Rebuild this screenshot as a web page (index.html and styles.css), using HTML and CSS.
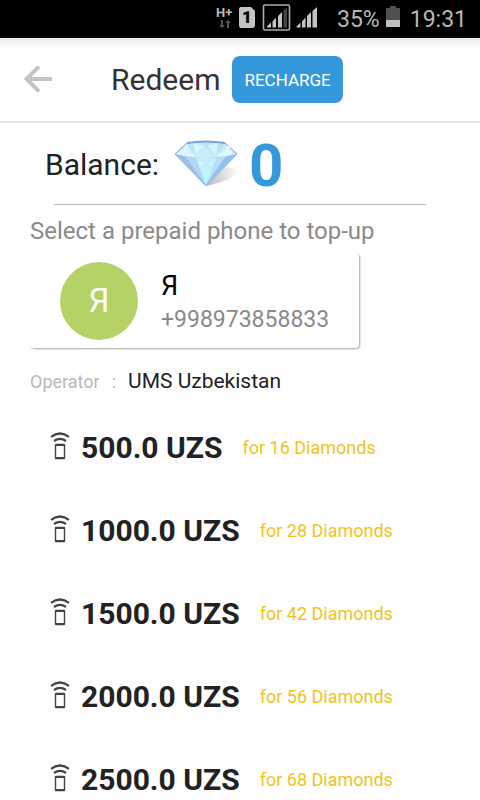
FILE: index.html
```html
<!DOCTYPE html>
<html lang="en">
<head>
<meta charset="utf-8">
<meta name="viewport" content="width=device-width, initial-scale=1">
<title>Redeem</title>
<link rel="stylesheet" href="styles.css">
</head>
<body>
<svg width="0" height="0" class="defs" aria-hidden="true">
  <symbol id="remote" viewBox="0 0 20 28">
    <g fill="none" stroke="#444">
      <path d="M1 4.800Q10-1.800 19 4.800" stroke-width="2.200"/>
      <path d="M4 9Q10 4.800 16 9" stroke-width="2.200"/>
      <rect x="5.500" y="12.500" width="9" height="14" rx=".5" stroke-width="1.400"/>
      <path d="M5 13h10M5 26h10" stroke-width="2"/>
    </g>
  </symbol>
</svg>
<div class="status">
  <svg class="status-icons" viewBox="0 0 120 38" role="img" aria-label="Signal strength">
    <text x="16" y="17" class="net">H+</text>
    <path d="M21 20h2v5h2l-3 3-3-3h2zM27 28v-5h-2l3-3 3 3h-2v5z" fill="#555"/>
    <path d="M41 7h10l4 4v14q0 3-3 3H41q-2 0-2-3V10q0-3 2-3z" fill="#c4c4c4"/>
    <text x="42" y="23" class="sim">1</text>
    <rect x="63.500" y="5" width="26" height="25" rx="1.500" fill="none" stroke="#aaa" stroke-width="1.600"/>
    <g fill="#c4c4c4">
      <path d="M67 27.500v-1l4-4v5zM72.500 27.500v-6l3.500-4v10zM78 27.500V16l4-4v15.500z"/>
      <path d="M83.500 27.500V11l3.500-4v20.500z" fill="#444"/>
      <path d="M96.500 27.500v-1l4-4v5zM102 27.500v-6l3.500-4v10zM107 27.500V16l4-4v15.500zM112.500 27.500V11l4.500-4v20.500z"/>
    </g>
  </svg>
  <span class="percent">35%</span>
  <svg class="battery" viewBox="0 0 14 22" aria-hidden="true">
    <path d="M4 0h6v2h4v12H0V2h4z" fill="#505050"/><path d="M0 14h14v7H0z" fill="#c0c0c0"/>
  </svg>
  <time>19:31</time>
</div>
<header class="bar">
  <button class="back" type="button" aria-label="Back">
    <svg viewBox="0 0 28 28" fill="none" stroke="#c4c4c4" stroke-width="4"><path d="M3 13h25M15 .5L2.500 13 15 25.500"/></svg>
  </button>
  <h1>Redeem</h1>
  <button class="recharge" type="button">RECHARGE</button>
</header>
<main>
  <section class="balance">
    <span class="balance-label">Balance:</span>
    <svg class="gem" viewBox="0 0 64 48" role="img" aria-label="Diamonds">
      <defs>
        <linearGradient id="shade" x1="0" x2="1"><stop offset="0" stop-color="#bbb"/><stop offset="1" stop-color="#f8f8f8"/></linearGradient>
        <linearGradient id="mid" x1="0" x2="0" y1="0" y2="1"><stop offset="0" stop-color="#c2edfd"/><stop offset="1" stop-color="#bdfaff"/></linearGradient>
      </defs>
      <path d="M32 46L50 28q10-2 12 4 2 7-30 14z" fill="url(#shade)"/>
      <path d="M1 14L13 3Q31 0 51 3L63 14 32 46z" fill="#a9ccf0" stroke="#83b0df"/>
      <path d="M13 4Q31 1 51 4L62 14 52 16Q31 20 11 16L2 14z" fill="#c9edfb"/>
      <path d="M13 4L22 16 30 5 42 16 51 4 36 3z" fill="#b3e5f8"/>
      <path d="M19 4L30 5 22 15zM44 4l-2 12-9-11z" fill="#d7f6ff"/>
      <path d="M2 14l9 2L32 45z" fill="#9dbfe8"/>
      <path d="M11 16l11 2 10 27z" fill="#b3d7f5"/>
      <path d="M22 18h21L32 45z" fill="url(#mid)"/>
      <path d="M43 18l9-2-20 29z" fill="#b7def8"/>
      <path d="M52 16l10-2-30 31z" fill="#98bfea"/>
      <path d="M2 14L11 8l11 9-11-1zM62 14l-9-6-11 9 10-1z" fill="#ddf7ff"/>
      <path d="M13 3Q31 0 51 3" fill="none" stroke="#79a5d5" stroke-width="1.800"/>
      <g fill="#f5f4ff"><circle cx="12" cy="7" r="1.500"/><circle cx="54" cy="8" r="2"/><circle cx="26" cy="23" r="1.500"/><circle cx="37" cy="24" r="1"/></g>
      <g fill="#e8c8ef"><circle cx="48" cy="6" r="1"/><circle cx="51" cy="17" r="1"/><circle cx="59" cy="13" r="1"/></g>
    </svg>
    <strong>0</strong>
  </section>
  <hr>
  <section class="details">
    <h2>Select a prepaid phone to top-up</h2>
    <button class="contact" type="button">
      <span class="avatar">Я</span>
      <span class="person"><span class="name">Я</span><span class="phone">+998973858833</span></span>
    </button>
    <p class="operator"><span>Operator</span><span class="colon">:</span><b>UMS Uzbekistan</b></p>
  </section>
  <ul class="offers">
    <li><svg aria-hidden="true"><use href="#remote"/></svg><b>500.0 UZS</b><span>for 16 Diamonds</span></li>
    <li><svg aria-hidden="true"><use href="#remote"/></svg><b>1000.0 UZS</b><span>for 28 Diamonds</span></li>
    <li><svg aria-hidden="true"><use href="#remote"/></svg><b>1500.0 UZS</b><span>for 42 Diamonds</span></li>
    <li><svg aria-hidden="true"><use href="#remote"/></svg><b>2000.0 UZS</b><span>for 56 Diamonds</span></li>
    <li><svg aria-hidden="true"><use href="#remote"/></svg><b>2500.0 UZS</b><span>for 68 Diamonds</span></li>
  </ul>
</main>
</body>
</html>
```
FILE: styles.css
```css
* { box-sizing: border-box; }
body {
  margin: 0;
  height: 100vh;
  display: flex;
  flex-direction: column;
  background: #fefefe;
  color: #222;
  font-family: Roboto, sans-serif;
}
button { border: 0; padding: 0; font: inherit; cursor: pointer; }
h1, h2, p, ul { margin: 0; padding: 0; font-weight: 400; }
.defs { position: absolute; }
.status {
  flex: none;
  height: 38px;
  display: flex;
  align-items: center;
  justify-content: flex-end;
  padding-right: 13px;
  background: #000;
  color: #b8b8b8;
  font-size: 23px;
}
.status-icons { width: 120px; height: 38px; margin-right: 17px; }
.net { font-size: 13px; font-weight: 700; fill: #b8b8b8; }
.sim { font-size: 17px; font-weight: 900; fill: #000; }
.battery { width: 14px; height: 22px; margin: 0 10px 4px 6px; }
.bar {
  flex: none;
  height: 85px;
  display: flex;
  align-items: center;
  padding-left: 24px;
  border-bottom: 2px solid #e6e6e6;
  background: linear-gradient(#e8e8e8, #fefefe 10px);
}
.back { width: 28px; height: 28px; margin-right: 59px; background: none; }
.back svg { display: block; }
h1 { font-size: 30px; line-height: 36px; color: #333; }
.recharge {
  height: 47px;
  margin-left: 12px;
  padding: 0 12px;
  border-radius: 8px;
  background: #3598db;
  color: #fff;
  font-size: 17px;
}
main { flex: 1; min-height: 0; overflow-y: auto; scrollbar-width: none; }
.balance { display: flex; align-items: center; height: 81px; padding-left: 45px; }
.balance-label { padding-top: 2px; font-size: 30px; }
.gem { width: 64px; height: 48px; margin: 0 11px 0 15px; }
.balance strong { padding-top: 4px; font-size: 60px; line-height: 70px; color: #3598db; }
hr { margin: 0 54px; border: 0; height: 1px; background: #b8b8b8; }
.details { padding: 12px 30px 0; }
h2 { font-size: 24px; line-height: 28px; color: #8a8a8a; }
.contact {
  display: flex;
  align-items: center;
  height: 95px;
  margin-top: 8px;
  padding: 0 30px;
  border-radius: 4px;
  background: #fff;
  box-shadow: 1px 1px 2px rgba(0, 0, 0, .35);
  text-align: left;
}
.avatar {
  display: grid;
  place-items: center;
  width: 78px;
  height: 78px;
  margin-right: 23px;
  border-radius: 50%;
  background: #b5d267;
  color: #fff;
  font-size: 33px;
}
.person { padding-top: 4px; }
.name, .phone { display: block; line-height: 34px; }
.name { font-size: 27px; color: #000; }
.phone { font-size: 23px; color: #8a8a8a; }
.operator { display: flex; align-items: baseline; margin-top: 20px; font-size: 18px; line-height: 26px; color: #b8b8b8; }
.operator b { font-size: 21px; font-weight: 400; color: #222; }
.colon { margin: 0 12px; }
.offers { list-style: none; margin-top: 11px; padding-left: 50px; }
.offers li { display: flex; align-items: center; height: 83px; }
.offers svg { width: 20px; height: 28px; margin: 0 11px 4px 0; }
.offers b { font-size: 30px; }
.offers span { margin-left: 20px; font-size: 18px; color: #f0c419; }
```
